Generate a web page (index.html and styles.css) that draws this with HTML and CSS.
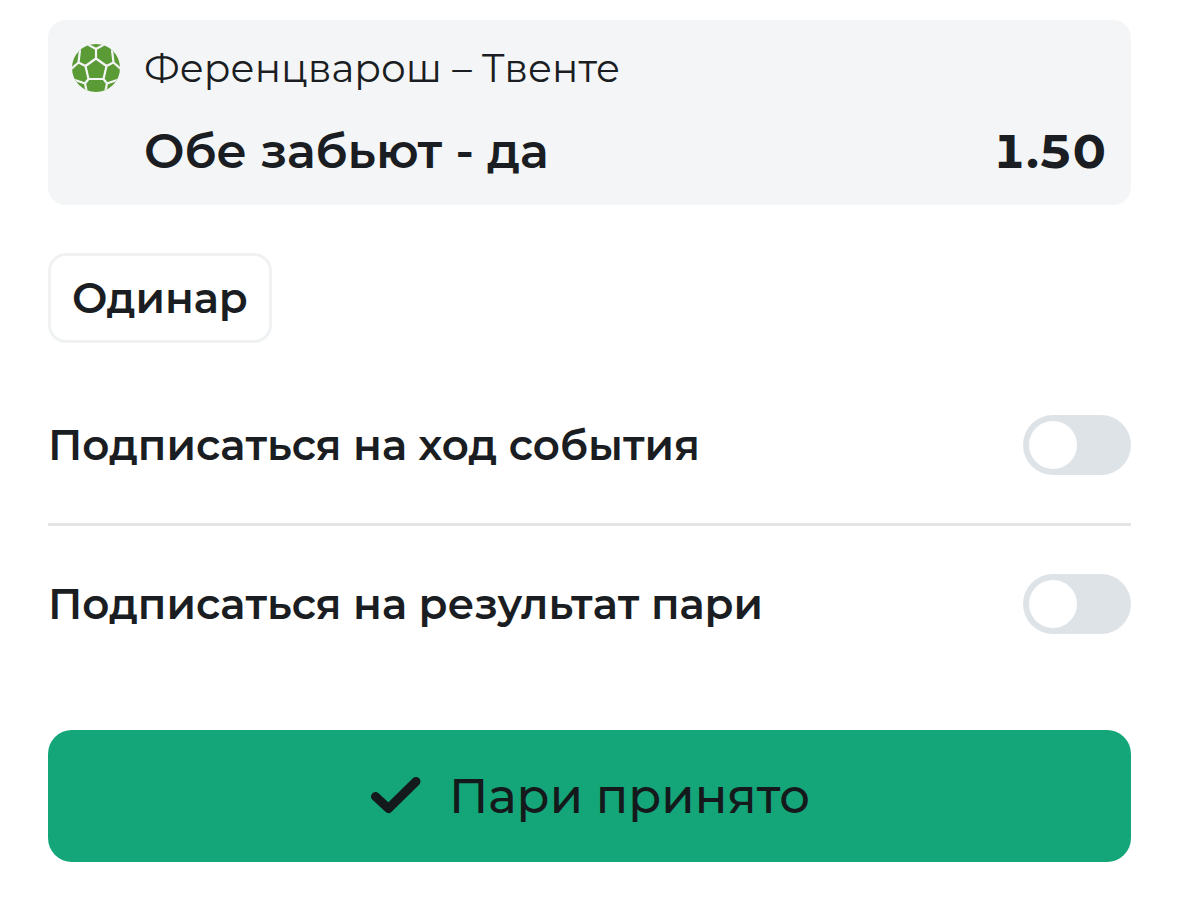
FILE: index.html
```html
<!DOCTYPE html>
<html lang="ru">
<head>
<meta charset="utf-8">
<meta name="viewport" content="width=device-width, initial-scale=1">
<title>Пари принято</title>
<link rel="stylesheet" href="styles.css">
</head>
<body>
<main class="coupon">
  <section class="bet">
    <svg class="bet-icon" viewBox="0 0 48 48" aria-hidden="true">
      <defs><clipPath id="ball"><circle cx="24" cy="24" r="24"/></clipPath></defs>
      <g clip-path="url(#ball)">
        <rect width="48" height="48" fill="#5b9b35"/>
        <path d="M24 14.500 34.500 22 31.500 35H16.500L13.500 22ZM24 14.500V5L13 -1M24 5 35 -1M34.500 22 41.500 18.500 40 6M41.500 18.500 50 26M13.500 22 6.500 18.500 8 6M6.500 18.500 -2 26M31.500 35 35 39.500 45 36M35 39.500 33 49M16.500 35 13 39.500 3 36M13 39.500 15 49" fill="none" stroke="#f3f5f7" stroke-width="2.200" stroke-linejoin="round"/>
      </g>
    </svg>
    <p class="bet-match">Ференцварош – Твенте</p>
    <h1 class="bet-pick">Обе забьют - да</h1>
    <p class="bet-odds">1.50</p>
  </section>
  <button class="kind" type="button">Одинар</button>
  <label class="option">
    <span>Подписаться на ход события</span>
    <input class="switch" type="checkbox" role="switch">
  </label>
  <label class="option">
    <span>Подписаться на результат пари</span>
    <input class="switch" type="checkbox" role="switch">
  </label>
  <button class="accepted" type="button">
    <svg class="accepted-icon" viewBox="0 0 52 38" aria-hidden="true"><path d="M6.500 19.500 19.500 31.500 47 4.500" fill="none" stroke="#141a1c" stroke-width="9" stroke-linecap="round" stroke-linejoin="round"/></svg>
    <span>Пари принято</span>
  </button>
</main>
</body>
</html>
```
FILE: styles.css
```css
* { box-sizing: border-box; }
body {
  margin: 0;
  background: #fff;
  color: #1a1d22;
  font-family: Montserrat, Inter, "Noto Sans", sans-serif;
}
p, h1 { margin: 0; }
button { font: inherit; color: inherit; }
.coupon {
  display: flex;
  flex-direction: column;
  padding: 20px 48px 48px;
}
.bet {
  display: grid;
  grid-template-columns: 48px 1fr auto;
  gap: 25px 24px;
  align-items: center;
  padding: 20px 25px 24px 24px;
  border-radius: 18px;
  background: #f3f5f7;
}
.bet-icon { width: 48px; height: 48px; }
.bet-match {
  grid-column: 2 / 4;
  font-size: 39px;
  font-weight: 400;
  line-height: 56px;
}
.bet-pick {
  grid-column: 2;
  font-size: 48px;
  font-weight: 600;
  line-height: 60px;
}
.bet-odds {
  font-size: 48px;
  font-weight: 700;
  line-height: 60px;
  font-variant-numeric: tabular-nums;
}
.kind {
  align-self: flex-start;
  margin: 48px 0 24px;
  padding: 13px 21px;
  border: 3px solid #eff1f3;
  border-radius: 18px;
  background: #fff;
  font-size: 42px;
  font-weight: 600;
  line-height: 58px;
}
.option {
  display: flex;
  align-items: center;
  justify-content: space-between;
  gap: 24px;
  padding: 48px 0;
  font-size: 42px;
  font-weight: 600;
  line-height: 60px;
}
.option + .option { border-top: 3px solid #e3e5e6; }
.switch {
  appearance: none;
  flex: none;
  width: 108px;
  height: 60px;
  margin: 0;
  padding: 6px;
  border-radius: 30px;
  background: #dee3e8;
}
.switch::before {
  content: "";
  display: block;
  width: 48px;
  height: 48px;
  border-radius: 50%;
  background: #fff;
}
.switch:checked::before { margin-left: auto; }
.accepted {
  display: flex;
  align-items: center;
  justify-content: center;
  gap: 28px;
  margin-top: 48px;
  padding: 36px 24px;
  border: 0;
  border-radius: 24px;
  background: #14a579;
  color: #141a1c;
  font-size: 48px;
  font-weight: 500;
  line-height: 60px;
}
.accepted-icon { width: 52px; height: 38px; }
```
